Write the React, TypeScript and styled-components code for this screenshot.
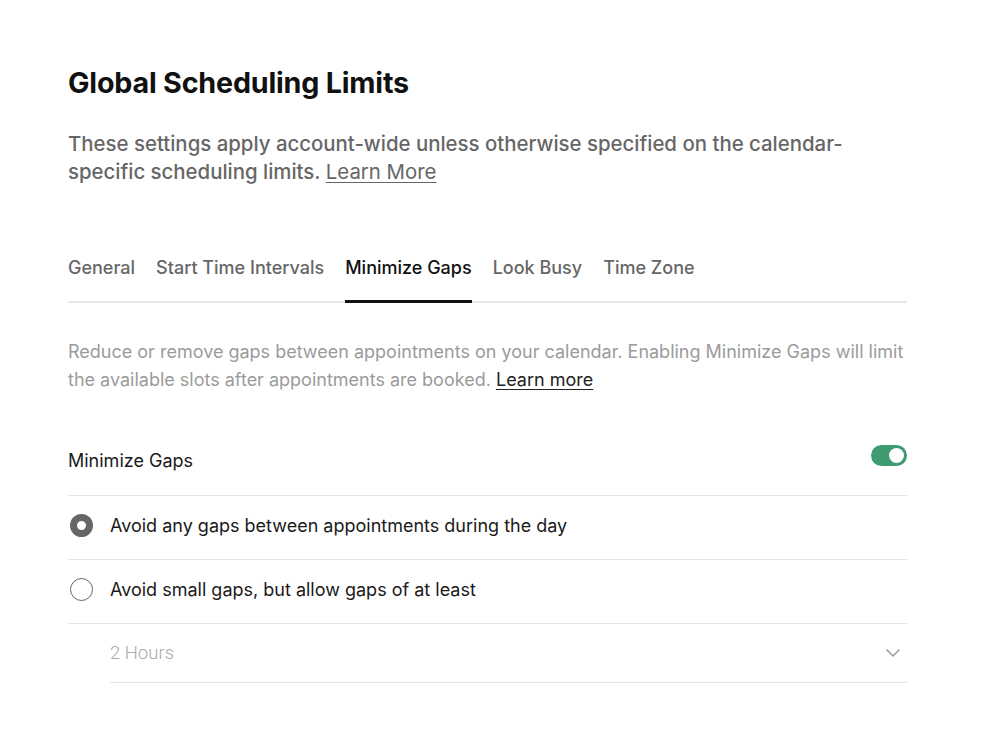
import { useState } from 'react';
import styled, { createGlobalStyle } from 'styled-components';

const GlobalStyle = createGlobalStyle`
  body {
    margin: 0;
    background: #fff;
    font-family: Inter, "Noto Sans", Arial, sans-serif;
    color: #1a1a1a;
  }
`;

const TABS = ['General', 'Start Time Intervals', 'Minimize Gaps', 'Look Busy', 'Time Zone'];

const OPTIONS = [
  'Avoid any gaps between appointments during the day',
  'Avoid small gaps, but allow gaps of at least',
];

export default function App() {
  const [tab, setTab] = useState('Minimize Gaps');
  const [enabled, setEnabled] = useState(true);
  const [choice, setChoice] = useState(0);

  return (
    <>
      <GlobalStyle />
      <Page>
        <Title>Global Scheduling Limits</Title>
        <Intro>
          These settings apply account-wide unless otherwise specified on the calendar-specific
          scheduling limits. <IntroLink href="#">Learn More</IntroLink>
        </Intro>

        <Tabs>
          {TABS.map((t) => (
            <Tab key={t} active={t === tab} onClick={() => setTab(t)}>
              {t}
            </Tab>
          ))}
        </Tabs>

        <Description>
          Reduce or remove gaps between appointments on your calendar. Enabling Minimize Gaps will
          limit the available slots after appointments are booked.{' '}
          <DescLink href="#">Learn more</DescLink>
        </Description>

        <ToggleRow>
          <RowLabel>Minimize Gaps</RowLabel>
          <Switch on={enabled} onClick={() => setEnabled(!enabled)}>
            <Knob on={enabled} />
          </Switch>
        </ToggleRow>

        {OPTIONS.map((label, i) => (
          <OptionRow key={label} onClick={() => setChoice(i)}>
            <Radio checked={choice === i} />
            <RowLabel>{label}</RowLabel>
          </OptionRow>
        ))}

        <SelectRow>
          <SelectValue>2 Hours</SelectValue>
          <svg width="16" height="10" viewBox="0 0 16 10" fill="none">
            <path d="M1.5 1.5 L8 8 L14.5 1.5" stroke="#9a9a9a" strokeWidth="1.5" />
          </svg>
        </SelectRow>
      </Page>
    </>
  );
}

const Page = styled.div`
  width: 839px;
  padding: 64px 0 60px 68px;
`;

const Title = styled.h1`
  margin: 0;
  font-size: 28.7px;
  line-height: 38px;
  font-weight: 700;
  letter-spacing: -0.2px;
  color: #111;
`;

const Intro = styled.p`
  margin: 28px 0 0;
  font-size: 20.4px;
  line-height: 28px;
  font-weight: 500;
  color: #666;
`;

const IntroLink = styled.a`
  color: #666;
  font-weight: 400;
  text-decoration: underline;
  text-underline-offset: 3px;
  text-decoration-thickness: 1px;
`;

const Tabs = styled.nav`
  display: flex;
  gap: 21px;
  margin-top: 70px;
  border-bottom: 2px solid #e8e8e8;
`;

const Tab = styled.button<{ active: boolean }>`
  background: none;
  border: 0;
  padding: 0 0 20px;
  margin-bottom: -2px;
  font-family: inherit;
  font-size: 18px;
  line-height: 24px;
  font-weight: 500;
  cursor: pointer;
  color: ${(p) => (p.active ? '#111' : '#666')};
  border-bottom: 3px solid ${(p) => (p.active ? '#111' : 'transparent')};
`;

const Description = styled.p`
  margin: 35px 0 0;
  font-size: 18px;
  line-height: 28px;
  color: #9b9b9b;
`;

const DescLink = styled.a`
  color: #222;
  text-decoration: underline;
  text-underline-offset: 3px;
`;

const Row = styled.div`
  display: flex;
  align-items: center;
  border-bottom: 1px solid #e3e3e3;
`;

const ToggleRow = styled(Row)`
  justify-content: space-between;
  margin-top: 32px;
  height: 69px;
`;

const OptionRow = styled(Row)`
  box-sizing: border-box;
  gap: 17px;
  height: 64px;
  padding: 0 0 4px 2px;
  cursor: pointer;
`;

const RowLabel = styled.span`
  font-size: 18px;
  color: #1a1a1a;
`;

const Switch = styled.button<{ on: boolean }>`
  position: relative;
  width: 36px;
  height: 21px;
  margin-top: -10px;
  padding: 0;
  border: 0;
  border-radius: 11px;
  background: ${(p) => (p.on ? '#3e9b72' : '#ccc')};
  cursor: pointer;
`;

const Knob = styled.span<{ on: boolean }>`
  position: absolute;
  top: 3px;
  left: ${(p) => (p.on ? '18px' : '3px')};
  width: 15px;
  height: 15px;
  border-radius: 50%;
  background: #fff;
`;

const Radio = styled.span<{ checked: boolean }>`
  box-sizing: border-box;
  width: 23px;
  height: 23px;
  border-radius: 50%;
  flex-shrink: 0;
  border: ${(p) => (p.checked ? '7.5px solid #666' : '1.5px solid #666')};
  background: #fff;
`;

const SelectRow = styled(Row)`
  justify-content: space-between;
  margin-left: 42px;
  height: 58px;
  padding-right: 6px;
`;

const SelectValue = styled.span`
  font-family: Roboto, "Liberation Sans", sans-serif;
  font-weight: 300;
  font-size: 18.5px;
  color: #aaa;
`;
